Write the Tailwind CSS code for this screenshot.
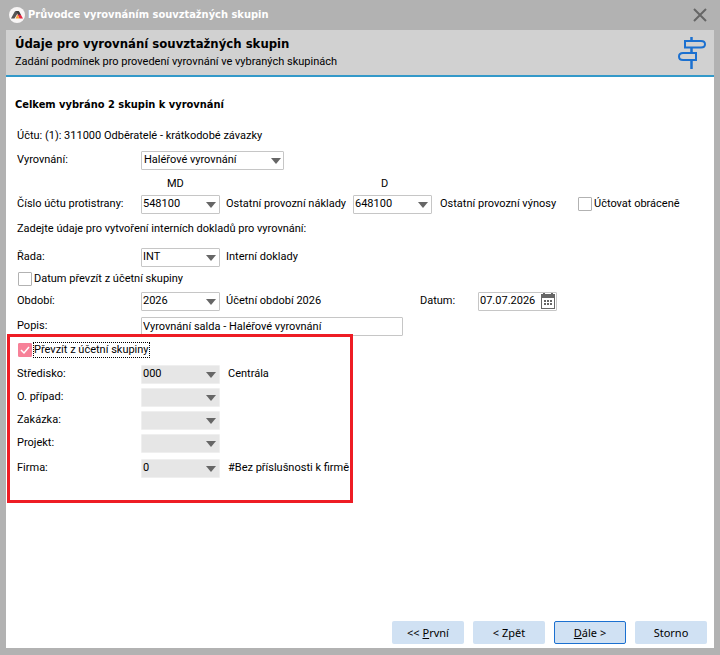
<!DOCTYPE html>
<html lang="cs">
  <head>
    <meta charset="UTF-8" />
    <meta name="viewport" content="width=device-width, initial-scale=1.0" />
    <title>Průvodce vyrovnáním souvztažných skupin</title>
    <script src="https://cdn.jsdelivr.net/npm/@tailwindcss/browser@4"></script>
  </head>

  <body
    class="flex flex-col min-h-screen bg-[#b2b2b2] px-[6px] pb-[7px] font-[Roboto,sans-serif] text-[11px] leading-5 text-black whitespace-nowrap"
  >
    <!-- Title bar -->
    <header class="flex items-center h-[30px] pl-[3px] pr-[7px]">
      <svg class="w-4 h-4" viewBox="0 0 16 16">
        <circle cx="8" cy="8" r="8" fill="#f7f5f5" />
        <path d="M2 11.500 5.500 5q.5-1 1.500-1h3L5.500 11.500z" fill="#555" />
        <path d="M7 4h2q1 0 1.500 1L12 8H9z" fill="#3c3c3c" />
        <path d="M8.500 7.500 12 8l2 3.500h-3.500z" fill="#e5243f" />
        <path d="M8.500 7.500 10.500 11.500H6.500z" fill="#f9a33a" />
      </svg>
      <span class="ml-[3px] font-['DejaVu_Sans_Condensed',sans-serif] font-bold text-white">Průvodce vyrovnáním souvztažných skupin</span>
      <button type="button" class="ml-auto" aria-label="Zavřít">
        <svg class="w-[14px] h-[14px]" viewBox="0 0 14 14" fill="none" stroke="#666" stroke-width="2">
          <path d="M1 1l12 12M13 1L1 13" />
        </svg>
      </button>
    </header>

    <!-- Wizard step heading -->
    <div class="flex items-center justify-between h-[47px] pl-[9px] pr-2 bg-[#d1d1d1] border-b-2 border-[#3399c9]">
      <div>
        <h1 class="font-['DejaVu_Sans_Condensed',sans-serif] text-[13px] leading-[18px] font-bold">Údaje pro vyrovnání souvztažných skupin</h1>
        <p class="leading-[18px]">Zadání podmínek pro provedení vyrovnání ve vybraných skupinách</p>
      </div>
      <svg class="w-7 h-8" viewBox="0 0 28 32" fill="none" stroke="#1b70d0" stroke-width="2">
        <path d="M13.500 0v4M13.500 11v5M13.500 23v9" stroke-width="2.500" />
        <path d="M7 4h16q4 0 4 3.250T23 10.500H7z" />
        <path d="M18 16H5q-4 0-4 3.500T5 23h13z" />
      </svg>
    </div>

    <form class="flex flex-col flex-1 bg-white">
      <div class="px-[11px]">
        <h2 class="mt-[18px] -ml-[2px] font-['DejaVu_Sans_Condensed',sans-serif] font-bold">Celkem vybráno 2 skupin k vyrovnání</h2>
        <p class="mt-[11px]">Účtu: (1): 311000 Odběratelé - krátkodobé závazky</p>

        <div class="flex items-center mt-1">
          <label for="vyrovnani" class="w-[124px]">Vyrovnání:</label>
          <div class="relative flex w-[143px]">
            <select id="vyrovnani" class="appearance-none w-full h-[19px] pl-[2px] border border-[#c6c6c6] rounded-[1px] bg-white leading-4">
              <option>Haléřové vyrovnání</option>
            </select>
            <svg class="absolute right-[3px] top-[7px] w-[10px] h-[6px] pointer-events-none" viewBox="0 0 10 6"><path d="M0 0h10L5 6z" fill="#666" /></svg>
          </div>
        </div>

        <div class="flex mt-1 pl-[124px]">
          <span class="w-[212px] pl-[26px]">MD</span>
          <span class="pl-[28px]">D</span>
        </div>

        <div class="flex items-center">
          <label for="ucet-md" class="w-[124px]">Číslo účtu protistrany:</label>
          <div class="relative flex w-[79px]">
            <select id="ucet-md" class="appearance-none w-full h-[19px] pl-[1px] border border-[#c6c6c6] rounded-[1px] bg-white leading-4">
              <option>548100</option>
            </select>
            <svg class="absolute right-1 top-[7px] w-[10px] h-[6px] pointer-events-none" viewBox="0 0 10 6"><path d="M0 0h10L5 6z" fill="#666" /></svg>
          </div>
          <span class="w-[127px] pl-[6px]">Ostatní provozní náklady</span>
          <div class="relative flex w-[79px] ml-[6px]">
            <select aria-label="Účet D" class="appearance-none w-full h-[19px] pl-[1px] border border-[#c6c6c6] rounded-[1px] bg-white leading-4">
              <option>648100</option>
            </select>
            <svg class="absolute right-1 top-[7px] w-[10px] h-[6px] pointer-events-none" viewBox="0 0 10 6"><path d="M0 0h10L5 6z" fill="#666" /></svg>
          </div>
          <span class="w-[138px] pl-2">Ostatní provozní výnosy</span>
          <label class="flex items-center gap-[2px] ml-2">
            <input type="checkbox" class="appearance-none w-[14px] h-[14px] border border-[#b2b2b2] rounded-[1px] checked:bg-[#f78198]" />
            Účtovat obráceně
          </label>
        </div>

        <p class="mt-[5px]">Zadejte údaje pro vytvoření interních dokladů pro vyrovnání:</p>

        <div class="flex items-center mt-2">
          <label for="rada" class="w-[124px]">Řada:</label>
          <div class="relative flex w-[79px]">
            <select id="rada" class="appearance-none w-full h-[19px] pl-[1px] border border-[#c6c6c6] rounded-[1px] bg-white leading-4">
              <option>INT</option>
            </select>
            <svg class="absolute right-1 top-[7px] w-[10px] h-[6px] pointer-events-none" viewBox="0 0 10 6"><path d="M0 0h10L5 6z" fill="#666" /></svg>
          </div>
          <span class="ml-[6px]">Interní doklady</span>
        </div>

        <label class="flex items-center gap-[2px] mt-[2px] w-fit ml-[1px]">
          <input type="checkbox" class="appearance-none w-[14px] h-[14px] border border-[#b2b2b2] rounded-[1px] checked:bg-[#f78198]" />
          Datum převzít z účetní skupiny
        </label>

        <div class="flex items-center mt-[2px]">
          <label for="obdobi" class="w-[124px]">Období:</label>
          <div class="relative flex w-[79px]">
            <select id="obdobi" class="appearance-none w-full h-[19px] pl-[1px] border border-[#c6c6c6] rounded-[1px] bg-white leading-4">
              <option>2026</option>
            </select>
            <svg class="absolute right-1 top-[7px] w-[10px] h-[6px] pointer-events-none" viewBox="0 0 10 6"><path d="M0 0h10L5 6z" fill="#666" /></svg>
          </div>
          <span class="w-[194px] ml-[6px]">Účetní období 2026</span>
          <label for="datum" class="w-[58px]">Datum:</label>
          <div class="flex items-center w-[79px] h-[19px] border border-[#c6c6c6] rounded-[1px]">
            <input id="datum" type="text" value="07.07.2026" class="w-[62px] pl-[1px] leading-4 outline-none" />
            <button type="button" aria-label="Kalendář">
              <svg class="w-[14px] h-[16px]" viewBox="0 0 14 16" fill="#666">
                <path d="M2 0h2v1h6V0h2v1h2v15H0V1h2zM1 5v10h12V5z" fill-rule="evenodd" />
                <path d="M3 7h2v2H3zM6 7h2v2H6zM9 7h2v2H9zM3 10h2v2H3zM6 10h2v2H6zM9 10h2v2H9z" />
              </svg>
            </button>
          </div>
        </div>

        <div class="flex items-center mt-[5px]">
          <label for="popis" class="w-[124px]">Popis:</label>
          <input id="popis" type="text" value="Vyrovnání salda - Haléřové vyrovnání" class="w-[262px] h-[19px] pl-[1px] border border-[#c6c6c6] rounded-[1px] leading-4" />
        </div>
      </div>

      <!-- Values taken over from the account group -->
      <section class="relative w-[346px] -mt-[2px] ml-[1px] pl-[7px] pt-[5px] pb-[22px] border-3 border-[#ee1c24]">
        <label class="flex items-center gap-[1px] w-fit ml-[1px]">
          <span class="relative flex">
            <input type="checkbox" checked class="peer appearance-none w-[14px] h-[14px] border border-[#b2b2b2] rounded-[1px] checked:bg-[#f78198] checked:border-[#f78198]" />
            <svg class="absolute inset-0 w-[14px] h-[14px] hidden peer-checked:block pointer-events-none" viewBox="0 0 14 14" fill="none" stroke="#fff" stroke-width="1.500"><path d="M3 7l3 3 5-6" /></svg>
          </span>
          <span class="leading-[14px] border border-dotted border-black">Převzít z účetní skupiny</span>
        </label>

        <div class="flex items-center mt-[6px]">
          <label for="stredisko" class="w-[124px]">Středisko:</label>
          <div class="relative flex w-[79px]">
            <select id="stredisko" disabled class="appearance-none w-full h-[19px] pl-[1px] border border-[#efefef] rounded-[1px] bg-[#e6e6e6] leading-4 opacity-100">
              <option>000</option>
            </select>
            <svg class="absolute right-1 top-[7px] w-[10px] h-[6px] pointer-events-none" viewBox="0 0 10 6"><path d="M0 0h10L5 6z" fill="#666" /></svg>
          </div>
          <span class="ml-2">Centrála</span>
        </div>

        <div class="flex items-center mt-[3px]">
          <label for="pripad" class="w-[124px]">O. případ:</label>
          <div class="relative flex w-[79px]">
            <select id="pripad" disabled class="appearance-none w-full h-[19px] pl-[1px] border border-[#efefef] rounded-[1px] bg-[#e6e6e6] leading-4 opacity-100"></select>
            <svg class="absolute right-1 top-[7px] w-[10px] h-[6px] pointer-events-none" viewBox="0 0 10 6"><path d="M0 0h10L5 6z" fill="#666" /></svg>
          </div>
        </div>

        <div class="flex items-center mt-[3px]">
          <label for="zakazka" class="w-[124px]">Zakázka:</label>
          <div class="relative flex w-[79px]">
            <select id="zakazka" disabled class="appearance-none w-full h-[19px] pl-[1px] border border-[#efefef] rounded-[1px] bg-[#e6e6e6] leading-4 opacity-100"></select>
            <svg class="absolute right-1 top-[7px] w-[10px] h-[6px] pointer-events-none" viewBox="0 0 10 6"><path d="M0 0h10L5 6z" fill="#666" /></svg>
          </div>
        </div>

        <div class="flex items-center mt-[3px]">
          <label for="projekt" class="w-[124px]">Projekt:</label>
          <div class="relative flex w-[79px]">
            <select id="projekt" disabled class="appearance-none w-full h-[19px] pl-[1px] border border-[#efefef] rounded-[1px] bg-[#e6e6e6] leading-4 opacity-100"></select>
            <svg class="absolute right-1 top-[7px] w-[10px] h-[6px] pointer-events-none" viewBox="0 0 10 6"><path d="M0 0h10L5 6z" fill="#666" /></svg>
          </div>
        </div>

        <div class="flex items-center mt-[5px]">
          <label for="firma" class="w-[124px] shrink-0">Firma:</label>
          <div class="relative flex w-[79px] shrink-0">
            <select id="firma" disabled class="appearance-none w-full h-[19px] pl-[1px] border border-[#efefef] rounded-[1px] bg-[#e6e6e6] leading-4 opacity-100">
              <option>0</option>
            </select>
            <svg class="absolute right-1 top-[7px] w-[10px] h-[6px] pointer-events-none" viewBox="0 0 10 6"><path d="M0 0h10L5 6z" fill="#666" /></svg>
          </div>
          <span class="ml-2">#Bez příslušnosti k firmě</span>
        </div>
      </section>

      <!-- Wizard buttons -->
      <footer class="flex justify-end gap-[9px] mt-auto pr-[7px] pb-1 font-['Noto_Sans',sans-serif]">
        <button type="button" class="w-[72px] h-[23px] bg-[#d0e1f3] rounded-[2px]">&lt;&lt; <u>P</u>rvní</button>
        <button type="button" class="w-[72px] h-[23px] bg-[#d0e1f3] rounded-[2px]">&lt; Zpět</button>
        <button type="submit" class="w-[72px] h-[23px] bg-[#d0e1f3] rounded-[2px] border border-[#1b70d0]"><u>D</u>ále &gt;</button>
        <button type="button" class="w-[72px] h-[23px] bg-[#d0e1f3] rounded-[2px]">Storno</button>
      </footer>
    </form>
  </body>
</html>
